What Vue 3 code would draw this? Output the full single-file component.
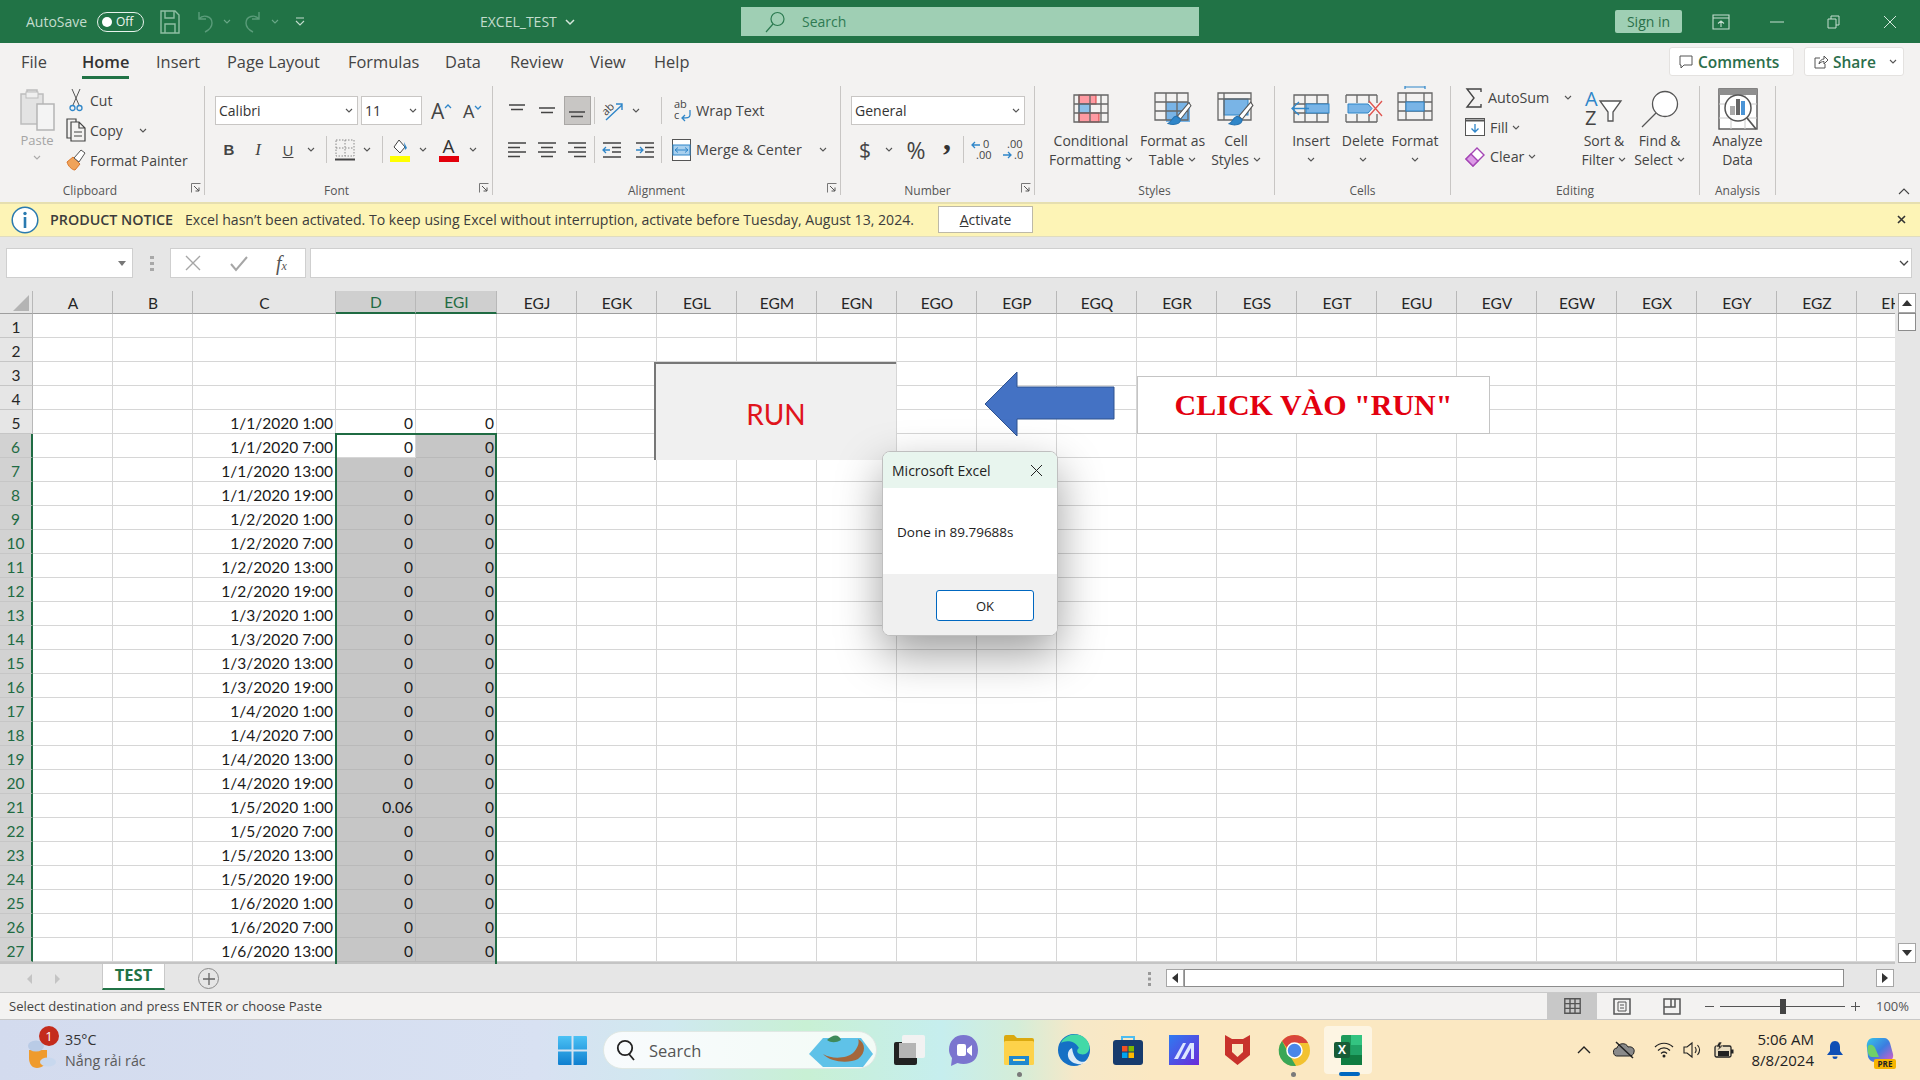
<template>
  <div class="app">
    <svg class="defs" width="0" height="0">
      <symbol id="chev" viewBox="0 0 8 5"><path d="M1 1l3 3 3-3" fill="none" stroke="#555" stroke-width="1.1" /></symbol>
      <symbol id="launch" viewBox="0 0 10 10">
        <path d="M.5 9.5V.5h9" fill="none" stroke="#777" />
        <path d="M3 3l5 5M8 4.500V8H4.500" fill="none" stroke="#555" />
      </symbol>
      <symbol id="brush" viewBox="0 0 24 24">
        <path d="M21 2 10 15l3 3L23 5z" fill="#fff" stroke="#555" />
        <path d="M9 15c-4 0-4 5-8 7 5 2 12 1 12-4z" fill="#2f86c9" stroke="#2572b0" />
      </symbol>
    </svg>

    <header class="titlebar">
      <span class="autosave">AutoSave</span>
      <span class="toggle"><i class="knob"></i>Off</span>
      <svg class="save" width="20" height="24" viewBox="0 0 20 24">
        <path d="M1 1h14l4 4v18H1zM5 1v7h9V1M5 23v-9h10v9" fill="none" stroke="#8fbfa3" stroke-width="1.4" />
      </svg>
      <svg class="undo" width="18" height="24" viewBox="0 0 18 24">
        <path d="M3 2v7h7M3 9c4-5 13-3 13 4 0 4-3 7-7 9" fill="none" stroke="#5a9c7a" stroke-width="1.4" />
      </svg>
      <svg class="small-chev" width="8" height="5" viewBox="0 0 8 5"><path d="M1 1l3 3 3-3" fill="none" stroke="#6aa888" stroke-width="1.1" /></svg>
      <svg class="redo" width="18" height="24" viewBox="0 0 18 24">
        <path d="M15 2v7H8M15 9C11 4 2 6 2 13c0 4 3 7 7 9" fill="none" stroke="#5a9c7a" stroke-width="1.4" />
      </svg>
      <svg class="small-chev" width="8" height="5" viewBox="0 0 8 5"><path d="M1 1l3 3 3-3" fill="none" stroke="#6aa888" stroke-width="1.1" /></svg>
      <svg class="customize" width="10" height="10" viewBox="0 0 10 10">
        <path d="M1 1h8M1 4l4 4 4-4" fill="none" stroke="#c3dccd" stroke-width="1.1" />
      </svg>
      <span class="docname">EXCEL_TEST</span>
      <svg width="10" height="6" viewBox="0 0 10 6"><path d="M1 1l4 4 4-4" fill="none" stroke="#d5e7dc" stroke-width="1.5" /></svg>
      <div class="searchbox">
        <svg width="20" height="22" viewBox="0 0 20 22">
          <circle cx="12.500" cy="8" r="6.500" fill="none" stroke="#2b7a50" stroke-width="1.2" />
          <path d="M8 13 1 21" stroke="#2b7a50" stroke-width="1.2" />
        </svg>
        <span>Search</span>
      </div>
      <span class="signin">Sign in</span>
      <svg class="ribbon-opt" width="18" height="16" viewBox="0 0 18 16">
        <path d="M1 1h16v14H1zM1 4h16M9 13V7M6 9.500 9 7l3 2.500" fill="none" stroke="#c6ded0" stroke-width="1.1" />
      </svg>
      <svg class="win-min" width="14" height="2"><path d="M0 1h14" stroke="#c6ded0" /></svg>
      <svg class="win-max" width="13" height="14" viewBox="0 0 13 14">
        <path d="M1 4h8v9H1zM4 4V1h8v9H9" fill="none" stroke="#c6ded0" />
      </svg>
      <svg class="win-close" width="14" height="14" viewBox="0 0 14 14"><path d="M1 1l12 12M13 1 1 13" stroke="#d5e7dc" /></svg>
    </header>

    <nav class="tabs">
      <span v-for="t in tabs" :key="t.name" class="tab" :class="{ active: t.name === 'Home' }" :style="{ width: t.w + 'px' }">
        <b v-if="t.name === 'Home'">{{ t.name }}</b><template v-else>{{ t.name }}</template>
      </span>
      <div class="tab-actions">
        <span class="action comments">
          <svg width="14" height="14" viewBox="0 0 14 14"><path d="M1 1h12v9H5l-3 3v-3H1z" fill="none" stroke="#555" /></svg>
          Comments
        </span>
        <span class="action share">
          <svg width="14" height="14" viewBox="0 0 14 14"><path d="M6 3H1v10h10V9M5 9c0-3 3-5 5-5V1l4 4-4 4V6.500C8 6.500 6 7.500 5 9z" fill="none" stroke="#555" /></svg>
          Share
          <svg class="share-chev" width="8" height="5"><use href="#chev" /></svg>
        </span>
      </div>
    </nav>

    <section class="ribbon">
      <!-- clipboard -->
      <div class="group g-clip">
        <div class="body clip">
          <div class="paste">
            <svg width="36" height="42" viewBox="0 0 36 42">
              <path d="M2 5h6V1h10v4h6v30H2z" fill="#e3e3e3" stroke="#bdbdbd" stroke-width="1.500" />
              <rect x="7" y="3" width="12" height="6" fill="#efefef" stroke="#bdbdbd" />
              <rect x="18" y="15" width="17" height="26" fill="#f4f4f4" stroke="#b5b5b5" stroke-width="1.500" />
            </svg>
            <span>Paste</span>
            <svg width="8" height="5"><use href="#chev" opacity=".45" /></svg>
          </div>
          <div class="clip-list">
            <div class="clip-row">
              <span class="clip-ico">
                <svg width="14" height="24" viewBox="0 0 14 24">
                  <path d="M3 1l7 16M11 1 4 17" stroke="#555" fill="none" />
                  <circle cx="3.500" cy="20" r="2.500" fill="none" stroke="#2f86c9" stroke-width="1.300" />
                  <circle cx="10.500" cy="20" r="2.500" fill="none" stroke="#2f86c9" stroke-width="1.300" />
                </svg>
              </span>
              <span>Cut</span>
            </div>
            <div class="clip-row">
              <span class="clip-ico">
                <svg width="20" height="24" viewBox="0 0 20 24">
                  <path d="M5 20H1V1h9v3" fill="none" stroke="#444" stroke-width="1.200" />
                  <path d="M5 4h8l6 6v13H5zM13 4v6h6M8 14h8M8 18h8" fill="none" stroke="#444" stroke-width="1.200" />
                </svg>
              </span>
              <span>Copy</span>
              <svg class="copy-chev" width="8" height="5"><use href="#chev" /></svg>
            </div>
            <div class="clip-row">
              <span class="clip-ico">
                <svg width="20" height="22" viewBox="0 0 20 22">
                  <path d="M1 13l6-5 7 7-5 6c-3 0-7-4-8-8z" fill="#f0a35a" stroke="#d9762a" />
                  <path d="M8 9l7-8 4 3-6 9z" fill="#fff" stroke="#555" />
                </svg>
              </span>
              <span>Format Painter</span>
            </div>
          </div>
        </div>
        <div class="label lb-24">Clipboard</div>
        <svg class="launch" width="10" height="10"><use href="#launch" /></svg>
      </div>

      <!-- font -->
      <div class="group g-font">
        <div class="body rows">
          <div class="row">
            <span class="select fontname">Calibri<svg width="8" height="5"><use href="#chev" /></svg></span>
            <span class="select fontsize">11<svg width="8" height="5"><use href="#chev" /></svg></span>
            <span class="grow">A
              <svg width="8" height="5" viewBox="0 0 8 5"><path d="M1 4l3-3 3 3" fill="none" stroke="#2f86c9" stroke-width="1.300" /></svg>
            </span>
            <span class="shrink">A
              <svg width="8" height="5" viewBox="0 0 8 5"><path d="M1 1l3 3 3-3" fill="none" stroke="#2f86c9" stroke-width="1.300" /></svg>
            </span>
          </div>
          <div class="row">
            <span class="slot w28 fmt bold">B</span>
            <span class="slot w30 fmt italic">I</span>
            <span class="slot w30 fmt under">U</span>
            <span class="slot w16"><svg width="8" height="5"><use href="#chev" /></svg></span>
            <i class="vsep sep-a"></i>
            <span class="slot w36">
              <svg width="20" height="22" viewBox="0 0 20 22">
                <path d="M1 1h18v16H1zM10 1v16M1 9h18" fill="none" stroke="#888" stroke-dasharray="1.500 1.500" />
                <path d="M0 20.500h20" stroke="#444" stroke-width="2" />
              </svg>
            </span>
            <span class="slot w8"><svg width="8" height="5"><use href="#chev" /></svg></span>
            <i class="vsep sep-b"></i>
            <span class="slot w34">
              <svg width="20" height="24" viewBox="0 0 20 24">
                <path d="M9 2l6 7-5 6-6-6z" fill="#fff" stroke="#444" />
                <path d="M14 4l3 6-2 2z" fill="#2f86c9" />
                <rect y="18" width="20" height="6" fill="#ffff00" />
              </svg>
            </span>
            <span class="slot w12"><svg width="8" height="5"><use href="#chev" /></svg></span>
            <span class="slot w39 fontcolor">
              <span>A</span><i></i>
            </span>
            <span class="slot w10"><svg width="8" height="5"><use href="#chev" /></svg></span>
          </div>
        </div>
        <div class="label lb-24">Font</div>
        <svg class="launch" width="10" height="10"><use href="#launch" /></svg>
      </div>

      <!-- alignment -->
      <div class="group g-align">
        <div class="body rows">
          <div class="row">
            <span v-for="(a, i) in alignTop" :key="a" class="slot w30" >
              <span class="align-cell" :class="{ picked: i === 2 }">
                <svg width="18" height="14" viewBox="0 0 18 14"><path :d="a" stroke="#444" stroke-width="1.300" /></svg>
              </span>
            </span>
            <i class="vsep sep-c"></i>
            <span class="slot w36">
              <svg width="22" height="22" viewBox="0 0 22 22">
                <text x="0" y="13" transform="rotate(-45 6 10)" class="orient">ab</text>
                <path d="M4 20 20 5M14 4h6v6" fill="none" stroke="#2f86c9" stroke-width="1.400" />
              </svg>
            </span>
            <span class="slot w10"><svg width="8" height="5"><use href="#chev" /></svg></span>
            <i class="vsep sep-d"></i>
            <span class="wrap-btn">
              <svg width="18" height="24" viewBox="0 0 18 24">
                <text x="0" y="9" class="mini">ab</text>
                <text x="0" y="20" class="mini">c</text>
                <path d="M16 11v5c0 3-3 3-8 3M11 16l-3 3 3 3" fill="none" stroke="#2f86c9" stroke-width="1.300" />
              </svg>
              Wrap Text
            </span>
          </div>
          <div class="row">
            <span v-for="a in alignBottom" :key="a" class="slot w30">
              <svg width="18" height="16" viewBox="0 0 18 16"><path :d="a" stroke="#444" stroke-width="1.300" /></svg>
            </span>
            <i class="vsep sep-c"></i>
            <span class="slot w34 indent-first">
              <svg width="20" height="16" viewBox="0 0 20 16">
                <path d="M1 1h18M10 5.500h9M10 10h9M1 15h18" stroke="#444" stroke-width="1.300" />
                <path d="M8 8H1M4 5 1 8l3 3" fill="none" stroke="#2f86c9" stroke-width="1.300" />
              </svg>
            </span>
            <span class="slot w32">
              <svg width="20" height="16" viewBox="0 0 20 16">
                <path d="M1 1h18M10 5.500h9M10 10h9M1 15h18" stroke="#444" stroke-width="1.300" />
                <path d="M1 8h7M5 5l3 3-3 3" fill="none" stroke="#2f86c9" stroke-width="1.300" />
              </svg>
            </span>
            <i class="vsep sep-e"></i>
            <span class="wrap-btn merge">
              <svg width="19" height="22" viewBox="0 0 19 22">
                <rect x=".5" y=".5" width="18" height="21" fill="#fff" stroke="#555" />
                <rect x="1" y="6" width="17" height="10" fill="#a9d0ee" stroke="#2f86c9" />
                <path d="M3 11h13M6 8.500 3 11l3 2.500M13 8.500l3 2.500-3 2.500" fill="none" stroke="#2f86c9" />
              </svg>
              Merge &amp; Center
              <svg class="merge-chev" width="8" height="5"><use href="#chev" /></svg>
            </span>
          </div>
        </div>
        <div class="label lb-20">Alignment</div>
        <svg class="launch" width="10" height="10"><use href="#launch" /></svg>
      </div>

      <!-- number -->
      <div class="group g-number">
        <div class="body rows">
          <div class="row">
            <span class="select numfmt">General<svg width="8" height="5"><use href="#chev" /></svg></span>
          </div>
          <div class="row">
            <span class="slot w28 dollar">$</span>
            <span class="slot w20"><svg width="8" height="5"><use href="#chev" /></svg></span>
            <span class="slot w34 percent">%</span>
            <span class="slot w28 comma">,</span>
            <i class="vsep sep-f"></i>
            <span class="slot w34 dec">
              <svg width="20" height="22" viewBox="0 0 20 22">
                <path d="M9 6H1M4 3 1 6l3 3" fill="none" stroke="#2f86c9" stroke-width="1.300" />
                <text x="12" y="9" class="mini">0</text><text x="5" y="20" class="mini">.00</text>
              </svg>
            </span>
            <span class="slot w28 dec">
              <svg width="20" height="22" viewBox="0 0 20 22">
                <text x="5" y="9" class="mini">.00</text><text x="12" y="20" class="mini">.0</text>
                <path d="M1 16h8M6 13l3 3-3 3" fill="none" stroke="#2f86c9" stroke-width="1.300" />
              </svg>
            </span>
          </div>
        </div>
        <div class="label lb-20">Number</div>
        <svg class="launch" width="10" height="10"><use href="#launch" /></svg>
      </div>

      <!-- styles -->
      <div class="group g-styles">
        <div class="body bigs">
          <div class="big w92">
            <div class="big-ico">
              <svg width="36" height="29" viewBox="0 0 36 29">
                <rect x="6" y="1" width="17" height="9" fill="#ff9aa2" stroke="#d63b3b" />
                <rect x="6" y="10" width="11" height="9" fill="#8dbfe8" stroke="#2f86c9" />
                <rect x="6" y="19" width="20" height="9" fill="#ff9aa2" stroke="#d63b3b" />
                <path d="M1 1h34v27H1zM1 10h34M1 19h34M6 1v27M17 1v27M28 1v27" fill="none" stroke="#666" stroke-width="1.300" />
              </svg>
            </div>
            <span>Conditional</span>
            <span>Formatting<svg class="inl" width="8" height="5"><use href="#chev" /></svg></span>
          </div>
          <div class="big w71">
            <div class="big-ico">
              <svg width="38" height="34" viewBox="0 0 38 34">
                <rect x="12" y="10" width="24" height="20" fill="#79b4e6" />
                <path d="M1 1h33v27H1zM1 10h33M1 19h33M12 1v27M23 1v27" fill="none" stroke="#666" stroke-width="1.300" />
                <use href="#brush" x="13" y="8" width="25" height="26" />
              </svg>
            </div>
            <span>Format as</span>
            <span>Table<svg class="inl" width="8" height="5"><use href="#chev" /></svg></span>
          </div>
          <div class="big w56">
            <div class="big-ico">
              <svg width="38" height="34" viewBox="0 0 38 34">
                <rect x="7" y="7" width="24" height="16" fill="#79b4e6" stroke="#2f86c9" />
                <path d="M1 1h33v27H1zM1 7h33M7 1v27" fill="none" stroke="#666" stroke-width="1.300" />
                <use href="#brush" x="11" y="8" width="26" height="26" />
              </svg>
            </div>
            <span>Cell</span>
            <span>Styles<svg class="inl" width="8" height="5"><use href="#chev" /></svg></span>
          </div>
        </div>
        <div class="label">Styles</div>
      </div>

      <!-- cells -->
      <div class="group g-cells">
        <div class="body bigs">
          <div class="big w52">
            <div class="big-ico">
              <svg width="40" height="30" viewBox="0 0 40 30">
                <path d="M3 1h34v27H3zM3 10h34M3 19h34M14 1v27M26 1v27" fill="none" stroke="#666" stroke-width="1.300" />
                <rect x="15" y="10" width="23" height="9" fill="#79b4e6" stroke="#2f86c9" />
                <path d="M18 14.500H2M8 8l-7 6.500L8 21" fill="none" stroke="#2f86c9" stroke-width="1.300" />
              </svg>
            </div>
            <span>Insert</span>
            <span><svg width="8" height="5"><use href="#chev" /></svg></span>
          </div>
          <div class="big w52">
            <div class="big-ico">
              <svg width="40" height="30" viewBox="0 0 40 30">
                <path d="M3 1h31M3 28h31M3 1v8M3 20v8M14 1v8M14 20v8M26 1v8M26 20v8M34 1v8M34 20v8" fill="none" stroke="#666" stroke-width="1.300" />
                <path d="M5 10h20l4 4.500-4 4.500H5z" fill="#79b4e6" stroke="#2f86c9" />
                <path d="M26 7l13 15M39 7 26 22" stroke="#e0544f" stroke-width="1.300" />
              </svg>
            </div>
            <span>Delete</span>
            <span><svg width="8" height="5"><use href="#chev" /></svg></span>
          </div>
          <div class="big w52">
            <div class="big-ico format-ico">
              <svg width="36" height="36" viewBox="0 0 36 36">
                <path d="M8 1h20M8 0v3M28 0v3" stroke="#2f86c9" stroke-width="1.200" />
                <path d="M1 7h34v27H1zM1 16h34M1 25h34M9 7v27M27 7v27" fill="none" stroke="#666" stroke-width="1.300" />
                <rect x="9" y="16" width="18" height="9" fill="#79b4e6" stroke="#2f86c9" />
              </svg>
            </div>
            <span>Format</span>
            <span><svg width="8" height="5"><use href="#chev" /></svg></span>
          </div>
        </div>
        <div class="label">Cells</div>
      </div>

      <!-- editing -->
      <div class="group g-edit">
        <div class="body bigs">
          <div class="edit-list">
            <div class="edit-row">
              <svg width="18" height="20" viewBox="0 0 18 20"><path d="M16 4V1H2l7 9-7 9h14v-3" fill="none" stroke="#444" stroke-width="1.400" /></svg>
              <span>AutoSum</span>
              <svg class="auto-chev" width="8" height="5"><use href="#chev" /></svg>
            </div>
            <div class="edit-row">
              <svg width="20" height="18" viewBox="0 0 20 18">
                <rect x=".5" y=".5" width="19" height="17" fill="#fff" stroke="#555" />
                <path d="M1 2.500h18" stroke="#555" stroke-width="2" />
                <path d="M10 6v8M6.500 10.500 10 14l3.500-3.500" fill="none" stroke="#2f86c9" stroke-width="1.300" />
              </svg>
              <span>Fill</span>
              <svg class="inl" width="8" height="5"><use href="#chev" /></svg>
            </div>
            <div class="edit-row">
              <svg width="20" height="20" viewBox="0 0 20 20">
                <path d="M1 12 12 1l7 7-11 11z" fill="#fff" stroke="#a445b5" stroke-width="1.400" />
                <path d="M1 12l5-5 7 7-5 5z" fill="#dc9be6" stroke="#a445b5" stroke-width="1.400" />
              </svg>
              <span>Clear</span>
              <svg class="inl" width="8" height="5"><use href="#chev" /></svg>
            </div>
          </div>
          <div class="big w58">
            <div class="big-ico">
              <svg width="38" height="36" viewBox="0 0 38 36">
                <text x="0" y="15" class="az blue">A</text>
                <text x="0" y="34" class="az">Z</text>
                <path d="M15 10h21l-8 11v9h-5v-9z" fill="#fff" stroke="#555" stroke-width="1.300" />
              </svg>
            </div>
            <span>Sort &amp;</span>
            <span>Filter<svg class="inl" width="8" height="5"><use href="#chev" /></svg></span>
          </div>
          <div class="big w53">
            <div class="big-ico">
              <svg width="38" height="38" viewBox="0 0 38 38">
                <circle cx="24" cy="14" r="12.500" fill="#fff" stroke="#555" stroke-width="1.300" />
                <path d="M15 23 1 37" stroke="#555" stroke-width="1.300" />
              </svg>
            </div>
            <span>Find &amp;</span>
            <span>Select<svg class="inl" width="8" height="5"><use href="#chev" /></svg></span>
          </div>
        </div>
        <div class="label">Editing</div>
      </div>

      <!-- analysis -->
      <div class="group g-analysis">
        <div class="body bigs">
          <div class="big w75">
            <div class="big-ico">
              <svg width="40" height="42" viewBox="0 0 40 42">
                <rect x="1" y="1" width="38" height="40" fill="#fff" stroke="#555" stroke-width="1.400" />
                <path d="M1 1h38v6H1z" fill="#8f8f8f" />
                <path d="M1 16h38M1 30h38M13 7v34M27 7v34" stroke="#ccc" />
                <circle cx="20" cy="20" r="13" fill="#fff" stroke="#555" stroke-width="1.500" />
                <rect x="12" y="18" width="5" height="9" fill="#aaa" />
                <rect x="18" y="11" width="4" height="16" fill="#666" />
                <rect x="23" y="13" width="4" height="14" fill="#4a94d6" />
                <path d="M29 30l9 11" stroke="#555" stroke-width="1.800" />
              </svg>
            </div>
            <span>Analyze</span>
            <span>Data</span>
          </div>
        </div>
        <div class="label">Analysis</div>
      </div>

      <svg class="collapse" width="12" height="7" viewBox="0 0 12 7"><path d="M1 6l5-5 5 5" fill="none" stroke="#444" stroke-width="1.100" /></svg>
    </section>

    <section class="notice">
      <svg width="28" height="28" viewBox="0 0 28 28">
        <circle cx="14" cy="14" r="12.800" fill="#fff" stroke="#2a7ab0" stroke-width="1.500" />
        <circle cx="14" cy="7.500" r="1.700" fill="#2a7ab0" />
        <rect x="12.700" y="11" width="2.600" height="11" fill="#2a7ab0" />
      </svg>
      <strong>PRODUCT NOTICE</strong>
      <span class="msg">Excel hasn’t been activated. To keep using Excel without interruption, activate before Tuesday, August 13, 2024.</span>
      <button class="activate"><u>A</u>ctivate</button>
      <svg class="notice-x" width="9" height="9" viewBox="0 0 9 9"><path d="M1 1l7 7M8 1 1 8" stroke="#333" stroke-width="1.600" /></svg>
    </section>

    <section class="formulabar">
      <div class="namebox"><i class="tri"></i></div>
      <svg class="grip" width="4" height="16" viewBox="0 0 4 16"><path d="M0 1h4v3H0zM0 7h4v3H0zM0 13h4v3H0z" fill="#a8a8a8" /></svg>
      <div class="fx">
        <svg width="16" height="16" viewBox="0 0 16 16"><path d="M1 1l14 14M15 1 1 15" stroke="#a6a6a6" stroke-width="1.400" /></svg>
        <svg width="18" height="15" viewBox="0 0 18 15"><path d="M1 8l5 6L17 1" fill="none" stroke="#a6a6a6" stroke-width="2" /></svg>
        <span class="fx-label">f<small>x</small></span>
      </div>
      <div class="formula-input">
        <svg width="10" height="6" viewBox="0 0 10 6"><path d="M1 1l4 4 4-4" fill="none" stroke="#444" stroke-width="1.300" /></svg>
      </div>
    </section>

    <section class="sheet-wrap">
      <div class="sheet">
        <div class="grid">
          <div class="corner"><i></i></div>
          <div v-for="c in columns" :key="c" class="colhead" :class="{ sel: c === 'D' || c === 'EGI' }">{{ c }}</div>
          <template v-for="r in rows" :key="r.n">
            <div class="rowhead" :class="{ sel: r.n >= 6 }">{{ r.n }}</div>
            <div
              v-for="(c, i) in columns"
              :key="c"
              class="cell"
              :class="{ shade: isShaded(r.n, c) }"
            >{{ r.vals[i] }}</div>
          </template>
        </div>
        <div class="selection"></div>

        <div class="run-btn">RUN</div>
        <svg class="arrow" width="131" height="66" viewBox="0 0 131 66">
          <path d="M130 16v32H33v17L1 33 33 1v15z" fill="#4472c4" stroke="#2f528f" />
        </svg>
        <div class="hint">CLICK VÀO "RUN"</div>

        <div class="dialog">
          <div class="dlg-head">
            <span>Microsoft Excel</span>
            <svg width="13" height="13" viewBox="0 0 13 13"><path d="M1 1l11 11M12 1 1 12" stroke="#222" /></svg>
          </div>
          <div class="dlg-body">Done in 89.79688s</div>
          <div class="dlg-foot"><button>OK</button></div>
        </div>
      </div>
      <div class="vscroll">
        <span class="sb-btn"><i class="tri-up"></i></span>
        <span class="vthumb"></span>
        <span class="sb-space"></span>
        <span class="sb-btn"><i class="tri-down"></i></span>
      </div>
    </section>

    <section class="tabbar">
      <i class="nav-l"></i>
      <i class="nav-r"></i>
      <span class="sheet-tab">TEST</span>
      <span class="add-sheet">
        <svg width="12" height="12" viewBox="0 0 12 12"><path d="M6 0v12M0 6h12" stroke="#666" stroke-width="1.300" /></svg>
      </span>
      <svg class="tab-grip" width="3" height="14" viewBox="0 0 3 14"><path d="M0 0h3v3H0zM0 5.500h3v3H0zM0 11h3v3H0z" fill="#999" /></svg>
      <div class="hscroll">
        <span class="sb-btn"><i class="tri-left"></i></span>
        <span class="hthumb"></span>
        <span class="sb-btn"><i class="tri-right"></i></span>
      </div>
    </section>

    <footer class="statusbar">
      <span class="status-text">Select destination and press ENTER or choose Paste</span>
      <div class="view-btns">
        <span class="view picked">
          <svg width="17" height="16" viewBox="0 0 17 16"><path d="M.8.800h15.400v14.400H.8zM.8 5.600h15.400M.8 10.400h15.400M6 .8v14.400M11 .8v14.400" fill="none" stroke="#555" stroke-width="1.400" /></svg>
        </span>
        <span class="view">
          <svg width="18" height="17" viewBox="0 0 18 17"><path d="M1 1h16v15H1z" fill="none" stroke="#555" stroke-width="1.500" /><path d="M5 4h8v9H5zM7 7h4M7 10h4" fill="none" stroke="#555" /></svg>
        </span>
        <span class="view">
          <svg width="18" height="17" viewBox="0 0 18 17"><path d="M1 1h16v15H1zM8 1v8H1M8 9h4V1" fill="none" stroke="#555" stroke-width="1.500" /></svg>
        </span>
      </div>
      <svg class="zoom-minus" width="9" height="1"><path d="M0 .5h9" stroke="#555" /></svg>
      <div class="zoom-track"><i></i></div>
      <svg class="zoom-plus" width="9" height="9" viewBox="0 0 9 9"><path d="M0 4.500h9M4.500 0v9" stroke="#555" /></svg>
      <span class="zoom-val">100%</span>
    </footer>

    <footer class="taskbar">
      <div class="weather">
        <div class="weather-ico">
          <svg width="34" height="34" viewBox="0 0 32 34">
            <path d="M3 14h18v8c0 6-5 10-10 10-5 0-8-4-8-10z" fill="#ef9b2d" />
            <ellipse cx="10" cy="10" rx="8" ry="5.500" fill="#b9cbe6" />
            <ellipse cx="22" cy="26" rx="8" ry="4.500" fill="#c8d8ee" />
          </svg>
          <span class="badge">1</span>
        </div>
        <div class="weather-text">
          <span>35°C</span>
          <span class="dim">Nắng rải rác</span>
        </div>
      </div>

      <svg class="winlogo" width="29" height="29" viewBox="0 0 29 29">
        <defs><linearGradient id="wl" x1="0" y1="0" x2="0" y2="1"><stop offset="0" stop-color="#4cc2f5" /><stop offset="1" stop-color="#0f7fcf" /></linearGradient></defs>
        <path d="M1 0h12.500v13.500H0V1a1 1 0 0 1 1-1zM15.500 0H28a1 1 0 0 1 1 1v12.500H15.500zM0 15.500h13.500V29H1a1 1 0 0 1-1-1zM15.500 15.500H29V28a1 1 0 0 1-1 1H15.500z" fill="url(#wl)" />
      </svg>

      <div class="tb-search">
        <svg width="20" height="22" viewBox="0 0 20 22">
          <circle cx="9" cy="9" r="7.200" fill="none" stroke="#222" stroke-width="1.800" />
          <path d="M13 15l5 6" stroke="#222" stroke-width="1.800" />
        </svg>
        <span>Search</span>
        <svg class="boat" width="64" height="36" viewBox="0 0 64 36">
          <path d="M14 6h38l12 16-10 13H14L0 22z" fill="#5fc2e8" />
          <path d="M18 8c6-6 12-6 14 0-5 3-10 3-14 0z" fill="#3f8a5a" />
          <path d="M14 22c10 6 24 4 30-1 4-4 7-10 5-14 8 4 8 14 0 20-10 5-28 3-35-5z" fill="#a4673b" />
        </svg>
      </div>

      <!-- task view -->
      <svg class="tb-ico taskview" width="31" height="30" viewBox="0 0 31 30">
        <rect x="0" y="7" width="23" height="23" rx="2" fill="#222" />
        <rect x="8" y="0" width="23" height="23" rx="2" fill="#f2f2f2" />
        <rect x="5" y="8" width="17" height="15" fill="#b5b5b5" />
      </svg>
      <!-- meet -->
      <svg class="tb-ico meet" width="29" height="31" viewBox="0 0 29 31">
        <path d="M14.500 0C23 0 29 6 29 15s-6 14-14.500 14c-2 0-4-.4-6-1L2 31l1-8C1 20 0 18 0 15 0 6 6 0 14.500 0z" fill="#7b75cf" />
        <rect x="8" y="9" width="9" height="12" rx="2" fill="#fff" />
        <path d="M18 14l5-4v11l-5-4z" fill="#fff" />
      </svg>
      <!-- folder -->
      <svg class="tb-ico folder" width="30" height="30" viewBox="0 0 30 30">
        <path d="M0 2a2 2 0 0 1 2-2h8l3 3h15a2 2 0 0 1 2 2v4H0z" fill="#dba90f" />
        <rect x="0" y="6" width="30" height="24" rx="1.500" fill="#fdd24a" />
        <rect x="5" y="21" width="20" height="9" fill="#1e88cf" />
        <rect x="9" y="24" width="12" height="2" fill="#ffe88a" />
      </svg>
      <!-- edge -->
      <svg class="tb-ico edge" width="32" height="32" viewBox="0 0 32 32">
        <circle cx="16" cy="16" r="16" fill="#1570c5" />
        <path d="M3 9C8-2 26-3 31 10c2 7-3 12-9 10-4-1-3-5-1-6C17 6 7 6 3 9z" fill="#43d9a7" />
        <path d="M14 14c-5 2-6 10 0 14 5 3 11 3 15-1-5 2-13 1-15-13z" fill="#fff" opacity=".85" />
      </svg>
      <!-- store -->
      <svg class="tb-ico store" width="30" height="30" viewBox="0 0 30 30">
        <path d="M9 6V2h12v4" fill="none" stroke="#4dbcf0" stroke-width="2" />
        <rect y="5" width="30" height="25" rx="3" fill="#173b6d" />
        <rect x="9" y="11" width="5.500" height="5.500" fill="#f25022" />
        <rect x="15.500" y="11" width="5.500" height="5.500" fill="#7fba00" />
        <rect x="9" y="17.500" width="5.500" height="5.500" fill="#00a4ef" />
        <rect x="15.500" y="17.500" width="5.500" height="5.500" fill="#ffb900" />
      </svg>
      <!-- pen app -->
      <svg class="tb-ico pen" width="30" height="30" viewBox="0 0 30 30">
        <defs><linearGradient id="pn" x1="0" y1="0" x2="1" y2="1"><stop offset="0" stop-color="#2f7bf0" /><stop offset="1" stop-color="#6a2bd9" /></linearGradient></defs>
        <rect width="30" height="30" fill="url(#pn)" />
        <path d="M5 24 14 8h3L9 24zM12 24l9-16h4v16h-3V13l-6 11z" fill="#dce6ff" />
      </svg>
      <!-- mcafee -->
      <svg class="tb-ico mcafee" width="25" height="30" viewBox="0 0 25 30">
        <path d="M0 0l7 4h11l7-4v20l-12.500 10L0 20z" fill="#c8322c" />
        <path d="M7 9h11v8l-5.500 5L7 17z" fill="#fbe8c2" />
      </svg>
      <!-- chrome -->
      <svg class="tb-ico chrome" width="31" height="31" viewBox="0 0 31 31">
        <circle cx="15.500" cy="15.500" r="15.500" fill="#f2c230" />
        <path d="M15.500 0A15.500 15.500 0 0 1 29 8H15.500a8 8 0 0 0-7.500 5L3 6A15.500 15.500 0 0 1 15.500 0z" fill="#d9453a" />
        <path d="M3 6l7.500 14L17 31A15.500 15.500 0 0 1 3 6z" fill="#3aa757" />
        <circle cx="15.500" cy="15.500" r="7.500" fill="#4a87e8" stroke="#fff" stroke-width="1.500" />
      </svg>
      <!-- excel -->
      <div class="tb-excel">
        <svg width="28" height="30" viewBox="0 0 28 30">
          <rect x="7" y="0" width="21" height="30" rx="2" fill="#1e9a5a" />
          <rect x="17" y="0" width="11" height="10" fill="#33c481" />
          <rect x="17" y="10" width="11" height="10" fill="#21a366" />
          <rect x="7" y="20" width="21" height="10" fill="#107c41" />
          <rect x="0" y="7" width="16" height="16" rx="2" fill="#185c37" />
          <text x="4" y="19" class="x-mark">X</text>
        </svg>
      </div>

      <div class="tray">
        <svg width="14" height="8" viewBox="0 0 14 8"><path d="M1 7l6-6 6 6" fill="none" stroke="#222" stroke-width="1.400" /></svg>
        <svg class="tray-cloud" width="22" height="18" viewBox="0 0 22 18">
          <path d="M5 15a4 4 0 0 1-1-8c1-5 9-6 11-1 4-1 7 2 6 5 0 3-3 4-5 4z" fill="#8a8a8a" stroke="#222" />
          <path d="M3 1l17 16" stroke="#222" stroke-width="1.500" />
        </svg>
        <svg class="tray-wifi" width="20" height="16" viewBox="0 0 20 16">
          <path d="M1 5c5-5 13-5 18 0M4 8.500c3.500-3.500 8.500-3.500 12 0M7 11.500c2-2 4-2 6 0" fill="none" stroke="#222" stroke-width="1.200" />
          <circle cx="10" cy="14" r="1.500" fill="#222" />
        </svg>
        <svg class="tray-vol" width="19" height="16" viewBox="0 0 19 16">
          <path d="M1 5h3l5-4v14l-5-4H1zM12 5c1.500 2 1.500 4 0 6M14.500 3c2.500 3 2.500 7 0 10" fill="none" stroke="#222" stroke-width="1.100" />
        </svg>
        <svg class="tray-bat" width="20" height="16" viewBox="0 0 20 16">
          <rect x="1" y="4" width="16" height="11" rx="1.500" fill="#e8dcc0" stroke="#222" stroke-width="1.300" />
          <rect x="4" y="9" width="11" height="5" fill="#222" />
          <rect x="17" y="7.500" width="2.500" height="4" fill="#222" />
          <path d="M5 0 2 5h3l-2 4 6-5H6l2-4z" fill="#222" stroke="#fbe8c2" stroke-width=".6" />
        </svg>
        <div class="clock"><span>5:06 AM</span><span>8/8/2024</span></div>
        <svg class="tray-bell" width="16" height="19" viewBox="0 0 16 19">
          <path d="M8 0c3.500 0 5 3 5 6v4l3 4H0l3-4V6c0-3 1.500-6 5-6z" fill="#0f4fb5" />
          <path d="M5.500 15.500h5a2.500 2.500 0 0 1-5 0z" fill="#0f4fb5" />
        </svg>
        <div class="copilot">
          <svg width="28" height="28" viewBox="0 0 28 28">
            <defs><linearGradient id="cp" x1="0" y1="0" x2="1" y2="1"><stop offset="0" stop-color="#36c4e8" /><stop offset=".5" stop-color="#3b7de0" /><stop offset="1" stop-color="#e05ac8" /></linearGradient></defs>
            <path d="M7 2h11c3 0 5 2 6 5l3 11c1 4-2 8-6 8H9c-3 0-6-2-7-5L1 12C0 6 3 2 7 2z" fill="url(#cp)" />
            <path d="M2 10c2-2 6-2 8 4l3 7H6c-4 0-5-7-4-11z" fill="#6fd06a" />
          </svg>
          <span class="pre">PRE</span>
        </div>
      </div>
      <i class="run-dot dot-a"></i>
      <i class="run-dot dot-b"></i>
      <i class="run-bar"></i>
    </footer>
  </div>
</template>

<script setup>
const tabs = [
  { name: 'File', w: 61 },
  { name: 'Home', w: 74 },
  { name: 'Insert', w: 71 },
  { name: 'Page Layout', w: 121 },
  { name: 'Formulas', w: 97 },
  { name: 'Data', w: 65 },
  { name: 'Review', w: 80 },
  { name: 'View', w: 64 },
  { name: 'Help', w: 60 }
]

const alignTop = [
  'M1 1h16M3 5.500h12',
  'M1 4h16M3 8.500h12',
  'M1 8h16M3 12.500h12'
]
const alignBottom = [
  'M0 1h18M0 5.500h12M0 10h18M0 14.500h12',
  'M0 1h18M3 5.500h12M0 10h18M3 14.500h12',
  'M0 1h18M6 5.500h12M0 10h18M6 14.500h12'
]

const columns = ['A', 'B', 'C', 'D', 'EGI', 'EGJ', 'EGK', 'EGL', 'EGM', 'EGN', 'EGO', 'EGP', 'EGQ', 'EGR', 'EGS', 'EGT', 'EGU', 'EGV', 'EGW', 'EGX', 'EGY', 'EGZ', 'EHA']

const hours = ['1:00', '7:00', '13:00', '19:00']

// rows 5..27 hold a date and two readings, one every six hours
const rows = Array.from({ length: 27 }, (_, i) => {
  const n = i + 1
  const vals = columns.map(() => '')
  if (n >= 5) {
    const k = n - 5
    vals[2] = `1/${Math.floor(k / 4) + 1}/2020 ${hours[k % 4]}`
    vals[3] = n === 21 ? '0.06' : '0'
    vals[4] = '0'
  }
  return { n, vals }
})

const isShaded = (n, c) => {
  if (n < 6 || (c !== 'D' && c !== 'EGI')) return false
  return !(n === 6 && c === 'D')
}
</script>

<style>
html, body { margin: 0; padding: 0; overflow: hidden; }
</style>

<style scoped>
.app {
  width: 1920px;
  height: 1080px;
  display: flex;
  flex-direction: column;
  font-family: "Open Sans", "Noto Sans", sans-serif;
  font-size: 14px;
  color: #444;
  overflow: hidden;
  background: #f3f2f1;
}
.defs { position: absolute; }
svg { display: block; flex: none; overflow: visible; }

/* title bar */
.titlebar {
  height: 43px;
  flex: none;
  background: #217346;
  display: flex;
  align-items: center;
  color: #c3dccd;
  padding-left: 26px;
}
.autosave { width: 71px; font-size: 14px; }
.toggle {
  width: 47px;
  height: 20px;
  box-sizing: border-box;
  border: 1.500px solid #e8f2ec;
  border-radius: 10px;
  display: flex;
  align-items: center;
  padding-left: 4px;
  gap: 4px;
  font-size: 12px;
  color: #eef5f1;
}
.knob { width: 10px; height: 10px; border-radius: 50%; background: #fff; }
.save { margin-left: 16px; }
.undo { margin-left: 16px; }
.small-chev { margin-left: 9px; }
.redo { margin-left: 13px; }
.customize { margin-left: 16px; }
.docname { margin-left: 175px; width: 85px; font-size: 14px; }
.searchbox {
  margin-left: 166px;
  width: 458px;
  height: 29px;
  background: #9fcfb4;
  display: flex;
  align-items: center;
  box-sizing: border-box;
  padding-left: 24px;
  gap: 17px;
  color: #2e7a52;
  font-size: 14px;
}
.signin {
  margin-left: 416px;
  width: 67px;
  height: 23px;
  line-height: 23px;
  text-align: center;
  background: #9fcfb4;
  color: #2a6f4a;
  border-radius: 2px;
}
.ribbon-opt { margin-left: 30px; }
.win-min { margin-left: 40px; }
.win-max { margin-left: 43px; }
.win-close { margin-left: 43px; }

/* tabs */
.tabs {
  height: 39px;
  flex: none;
  box-sizing: border-box;
  display: flex;
  align-items: center;
  padding: 0 0 2px 21px;
  font-size: 16.400px;
  color: #444;
}
.tab { flex: none; position: relative; }
.tab b { font-weight: 600; color: #333; }
.tab.active::after {
  content: "";
  position: absolute;
  left: 0;
  bottom: -6px;
  width: 47px;
  height: 3px;
  background: #217346;
}
.tab-actions { margin-left: auto; display: flex; gap: 10px; padding-right: 16px; }
.action {
  height: 29px;
  background: #fff;
  border: 1px solid #e4e2e0;
  border-radius: 3px;
  box-sizing: border-box;
  display: flex;
  align-items: center;
  gap: 5px;
  font-weight: 600;
  color: #2b6e4b;
  font-size: 15.500px;
}
.comments { width: 125px; padding-left: 9px; }
.share { width: 100px; padding-left: 9px; }
.share-chev { margin-left: 8px; }

/* ribbon */
.ribbon {
  height: 120px;
  flex: none;
  display: flex;
  box-sizing: border-box;
  padding: 4px 0 7px;
}
.group {
  position: relative;
  flex: none;
  box-sizing: border-box;
  border-right: 1px solid #c8c6c4;
  display: flex;
  flex-direction: column;
}
.g-clip { width: 205px; }
.g-font { width: 288px; }
.g-align { width: 348px; }
.g-number { width: 194px; }
.g-styles { width: 240px; }
.g-cells { width: 176px; }
.g-edit { width: 249px; }
.g-analysis { width: 76px; }
.body { flex: 1; min-height: 0; }
.label {
  height: 18px;
  margin-bottom: -5px;
  line-height: 18px;
  text-align: center;
  font-size: 12px;
  color: #555;
}
.lb-24 { padding-right: 24px; }
.lb-20 { padding-right: 20px; }
.launch { position: absolute; right: 3px; bottom: 2px; }
.collapse { margin: auto 10px 0 auto; }

.clip { display: flex; padding-left: 19px; }
.paste {
  width: 36px;
  padding-top: 3px;
  display: flex;
  flex-direction: column;
  align-items: center;
  color: #a5a5a5;
  font-size: 13px;
}
.paste svg:last-child { margin-top: 6px; }
.clip-list { margin: -1px 0 0 11px; display: flex; flex-direction: column; }
.clip-row {
  height: 30px;
  display: flex;
  align-items: center;
  gap: 4px;
  white-space: nowrap;
}
.clip-ico { width: 20px; display: flex; justify-content: center; flex: none; }
.copy-chev { margin-left: 12px; }

.rows { display: flex; flex-direction: column; gap: 10px; padding-top: 10px; }
.row { display: flex; align-items: center; height: 29px; }
.g-font .rows { padding-left: 10px; }
.g-align .rows { padding-left: 9px; }
.g-number .rows { padding-left: 10px; }
.select {
  box-sizing: border-box;
  height: 29px;
  background: #fff;
  border: 1px solid #c8c6c4;
  display: flex;
  align-items: center;
  justify-content: space-between;
  padding: 0 4px 0 3px;
  color: #333;
  font-size: 14px;
}
.fontname { width: 143px; }
.fontsize { width: 61px; margin-left: 3px; }
.numfmt { width: 174px; }
.grow, .shrink { font-size: 21px; color: #444; display: flex; align-items: flex-start; }
.grow { margin-left: 9px; width: 32px; }
.shrink { font-size: 18px; width: 28px; }
.grow svg { margin: 7px 0 0 0; }
.shrink svg { margin: 6px 0 0 0; }
.slot { display: flex; align-items: center; justify-content: center; flex: none; height: 29px; }
.w8 { width: 8px; }
.w10 { width: 10px; }
.w12 { width: 12px; }
.w16 { width: 16px; }
.w20 { width: 20px; }
.w28 { width: 28px; }
.w30 { width: 30px; }
.w32 { width: 32px; }
.w34 { width: 34px; }
.w36 { width: 36px; }
.w39 { width: 39px; }
.fmt { font-size: 15px; color: #444; }
.bold { font-weight: 700; font-family: "Liberation Sans", sans-serif; }
.italic { font-style: italic; font-family: "Liberation Serif", serif; font-size: 17px; }
.under { text-decoration: underline; }
.vsep { width: 1px; height: 27px; background: #c8c6c4; flex: none; }
.sep-a { margin-left: 7px; }
.sep-b { margin-left: 11px; }
.sep-c { margin-left: 2px; }
.sep-d { margin-left: 20px; }
.sep-e { margin-left: 0; }
.sep-f { margin-left: 2px; }
.fontcolor { flex-direction: column; color: #333; font-size: 19px; line-height: 19px; }
.fontcolor i { width: 20px; height: 6px; background: #e3000b; display: block; }
.align-cell { width: 27px; height: 29px; display: flex; align-items: center; justify-content: center; }
.align-cell.picked { background: #c8c6c4; box-shadow: inset 0 0 0 1px #a9a7a5; }
.orient { font-size: 11px; fill: #444; }
.mini { font-size: 11px; fill: #444; font-family: "Open Sans", sans-serif; }
.wrap-btn { margin-left: 12px; display: flex; align-items: center; gap: 4px; white-space: nowrap; font-size: 14.400px; }
.merge { margin-left: 10px; gap: 5px; }
.merge-chev { margin-left: 12px; }
.dollar { font-size: 21px; color: #444; }
.percent { font-size: 23px; color: #444; }
.comma {
  font-size: 32px;
  font-weight: 700;
  line-height: 8px;
  color: #333;
  font-family: "Liberation Serif", serif;
  align-items: flex-start;
}

.bigs { display: flex; padding-left: 10px; }
.big { display: flex; flex-direction: column; align-items: center; flex: none; line-height: 19px; white-space: nowrap; }
.big span { height: 19px; display: flex; align-items: center; }
.big-ico { height: 45px; display: flex; align-items: center; justify-content: center; }
.format-ico { align-items: flex-start; padding-top: 0; }
.inl { margin-left: 4px; }
.w92 { width: 92px; }
.w71 { width: 71px; }
.w56 { width: 56px; }
.w52 { width: 52px; }
.w58 { width: 58px; }
.w53 { width: 53px; }
.w75 { width: 75px; }
.g-analysis .bigs { padding-left: 0; }
.g-edit .bigs { padding-left: 14px; }
.edit-list { width: 110px; display: flex; flex-direction: column; margin-top: -3px; font-size: 14.300px; }
.edit-row { height: 29.500px; display: flex; align-items: center; gap: 5px; }
.edit-row .inl { margin-left: -1px; }
.auto-chev { margin-left: 10px; }
.az { font-size: 20px; fill: #444; font-family: "Open Sans", sans-serif; }
.az.blue { fill: #2f86c9; }

/* notice */
.notice {
  height: 35px;
  flex: none;
  box-sizing: border-box;
  background: #fdf4b6;
  border-top: 2px solid #e6dfb0;
  border-bottom: 1px solid #e0dcc0;
  display: flex;
  align-items: center;
  padding: 0 0 1px 11px;
  color: #3c3c3c;
}
.notice strong { margin-left: 11px; width: 135px; font-weight: 600; font-size: 14.300px; white-space: nowrap; }
.msg { width: 753px; white-space: nowrap; font-size: 14.120px; }
.activate {
  width: 95px;
  height: 27px;
  background: #fff;
  border: 1px solid #bdb9a8;
  font: inherit;
  color: #333;
  padding: 0;
}
.notice-x { margin-left: auto; margin-right: 14px; }

/* formula bar */
.formulabar {
  height: 54px;
  flex: none;
  background: #e6e6e6;
  display: flex;
  align-items: flex-start;
  padding-top: 11px;
  box-sizing: border-box;
}
.namebox, .fx, .formula-input {
  height: 30px;
  background: #fff;
  border: 1px solid #cfcfcf;
  box-sizing: border-box;
}
.namebox { margin-left: 6px; width: 127px; display: flex; align-items: center; justify-content: flex-end; padding-right: 6px; }
.tri { width: 0; height: 0; border: 4px solid transparent; border-top: 5px solid #777; border-bottom: 0; }
.grip { margin: 7px 0 0 17px; }
.fx {
  margin-left: 16px;
  width: 136px;
  display: flex;
  align-items: center;
  padding-left: 14px;
  gap: 29px;
}
.fx-label { font-family: "Liberation Serif", serif; font-style: italic; font-size: 20px; color: #555; margin-left: -1px; }
.fx-label small { font-size: 12px; }
.formula-input {
  margin-left: 4px;
  width: 1602px;
  display: flex;
  align-items: center;
  justify-content: flex-end;
  padding-right: 2px;
}

/* sheet */
.sheet-wrap { height: 673px; flex: none; display: flex; background: #e6e6e6; }
.sheet { position: relative; width: 1895px; height: 673px; flex: none; overflow: hidden; }
.grid {
  display: grid;
  width: 1937px;
  grid-template-columns: 33px 80px 80px 143px 80px 81px repeat(17, 80px) 80px;
  grid-template-rows: 23px repeat(27, 24px);
  font-family: Lato, "Liberation Sans", sans-serif;
  font-size: 15.500px;
  color: #1a1a1a;
  background: #fff;
  border-bottom: 2px solid #c4c4c4;
}
.corner { background: #e6e6e6; position: relative; border-right: 1px solid #b8b8b8; border-bottom: 1px solid #9e9e9e; box-sizing: border-box; }
.corner i {
  position: absolute;
  right: 3px;
  bottom: 2px;
  width: 0;
  height: 0;
  border-left: 16px solid transparent;
  border-bottom: 16px solid #b4b4b4;
}
.colhead {
  background: #e6e6e6;
  box-sizing: border-box;
  border-right: 1px solid #b8b8b8;
  border-bottom: 1px solid #9e9e9e;
  display: flex;
  align-items: center;
  justify-content: center;
  padding: 1px 0 0 1px;
  color: #262626;
  overflow: hidden;
}
.colhead.sel { background: #cfcfcf; color: #1f6b43; border-bottom: 2px solid #1f6b43; }
.rowhead {
  background: #e6e6e6;
  box-sizing: border-box;
  border-right: 1px solid #b8b8b8;
  border-bottom: 1px solid #c6c6c6;
  display: flex;
  align-items: center;
  justify-content: center;
  padding-top: 2px;
  color: #262626;
}
.rowhead.sel { background: #d2d2d2; color: #1f6b43; border-right: 2px solid #1f6b43; }
.cell {
  box-sizing: border-box;
  border-right: 1px solid #d6d6d6;
  border-bottom: 1px solid #d6d6d6;
  display: flex;
  align-items: center;
  justify-content: flex-end;
  padding: 2px 2px 0 0;
  white-space: nowrap;
}
.cell.shade { background: #c6c6c6; border-color: #b9b9b9; }
.selection {
  position: absolute;
  left: 335px;
  top: 142px;
  width: 162px;
  height: 531px;
  box-sizing: border-box;
  border: 2px solid #1f6b43;
  border-bottom: 0;
  pointer-events: none;
}

.run-btn {
  position: absolute;
  left: 654px;
  top: 71px;
  width: 242px;
  height: 98px;
  box-sizing: border-box;
  padding-top: 3px;
  background: #f0f0f0;
  border-left: 2px solid #777;
  border-top: 2px solid #777;
  display: flex;
  align-items: center;
  justify-content: center;
  color: #e0141c;
  font-family: Lato, "Liberation Sans", sans-serif;
  font-size: 28px;
}
.arrow { position: absolute; left: 984px; top: 80px; }
.hint {
  position: absolute;
  left: 1137px;
  top: 85px;
  width: 353px;
  height: 58px;
  box-sizing: border-box;
  background: #fff;
  border: 1px solid #c4c4c4;
  display: flex;
  align-items: center;
  justify-content: center;
  color: #e3000f;
  font-family: "Liberation Serif", serif;
  font-weight: 700;
  font-size: 30px;
  white-space: nowrap;
}
.dialog {
  position: absolute;
  left: 882px;
  top: 160px;
  width: 176px;
  height: 185px;
  box-sizing: border-box;
  border: 1px solid #bfbfbf;
  border-radius: 8px;
  overflow: hidden;
  display: flex;
  flex-direction: column;
  background: #fff;
  box-shadow: 0 18px 45px rgba(0, 0, 0, 0.38);
  font-size: 14px;
  color: #222;
}
.dlg-head {
  height: 36px;
  flex: none;
  background: #e8f5ee;
  display: flex;
  align-items: center;
  justify-content: space-between;
  padding: 0 14px 0 9px;
  white-space: nowrap;
}
.dlg-body {
  height: 86px;
  flex: none;
  display: flex;
  align-items: center;
  padding: 1px 0 0 14px;
  box-sizing: border-box;
  font-size: 13.500px;
  white-space: nowrap;
}
.dlg-foot {
  flex: 1;
  background: #f0f0f0;
  padding: 16px 0 0 53px;
}
.dlg-foot button {
  width: 98px;
  height: 31px;
  background: #fff;
  border: 1.500px solid #0067c0;
  border-radius: 3px;
  font: inherit;
  font-size: 13px;
  color: #222;
  padding: 0;
}

.vscroll {
  flex: 1;
  display: flex;
  flex-direction: column;
  align-items: center;
  box-sizing: border-box;
  padding: 2px 2px 1px 0;
  height: 673px;
}
.sb-btn {
  width: 18px;
  height: 20px;
  background: #fff;
  border: 1px solid #a6a6a6;
  box-sizing: border-box;
  display: flex;
  align-items: center;
  justify-content: center;
  flex: none;
}
.vthumb { width: 18px; height: 18px; background: #fff; border: 1px solid #8c8c8c; box-sizing: border-box; flex: none; }
.sb-space { flex: 1; }
.tri-up { border: 5px solid transparent; border-bottom: 6px solid #333; border-top: 0; }
.tri-down { border: 5px solid transparent; border-top: 6px solid #333; border-bottom: 0; }
.tri-left { border: 5px solid transparent; border-right: 6px solid #333; border-left: 0; }
.tri-right { border: 5px solid transparent; border-left: 6px solid #333; border-right: 0; }

/* sheet tabs */
.tabbar {
  height: 29px;
  flex: none;
  box-sizing: border-box;
  background: #e6e6e6;
  border-bottom: 1px solid #c9c9c9;
  display: flex;
  align-items: flex-start;
  padding-left: 27px;
}
.nav-l { margin-top: 10px; border: 5px solid transparent; border-right: 5px solid #c4c4c4; border-left: 0; }
.nav-r { margin: 10px 0 0 23px; border: 5px solid transparent; border-left: 5px solid #c4c4c4; border-right: 0; }
.sheet-tab {
  margin-left: 42px;
  width: 63px;
  height: 26px;
  box-sizing: border-box;
  background: #fff;
  border: 1px solid #c9c9c9;
  border-top: 0;
  border-bottom: 2px solid #217346;
  text-align: center;
  line-height: 21px;
  font-weight: 700;
  color: #217346;
  font-size: 16.500px;
}
.add-sheet {
  margin: 4px 0 0 33px;
  width: 21px;
  height: 21px;
  box-sizing: border-box;
  border: 1px solid #8a8a8a;
  border-radius: 50%;
  display: flex;
  align-items: center;
  justify-content: center;
}
.tab-grip { margin: 8px 0 0 929px; }
.hscroll { margin: 5px 0 0 15px; display: flex; width: 728px; height: 18px; align-items: stretch; }
.hscroll .sb-btn { height: 18px; }
.hthumb { width: 660px; background: #fff; border: 1px solid #8c8c8c; box-sizing: border-box; margin: 0 32px 0 0; }

/* status bar */
.statusbar {
  height: 27px;
  flex: none;
  box-sizing: border-box;
  background: #f3f2f1;
  border-bottom: 1px solid #c8c8c8;
  display: flex;
  align-items: center;
  padding-left: 9px;
  font-size: 13px;
  color: #444;
}
.status-text { width: 1538px; white-space: nowrap; }
.view-btns { display: flex; height: 100%; }
.view { width: 50px; display: flex; align-items: center; justify-content: center; }
.view.picked { background: #c8c8c8; }
.zoom-minus { margin-left: 8px; }
.zoom-track { margin-left: 6px; width: 125px; height: 1px; background: #555; position: relative; }
.zoom-track i { position: absolute; left: 60px; top: -7px; width: 6px; height: 15px; background: #444; }
.zoom-plus { margin-left: 6px; }
.zoom-val { margin-left: 16px; color: #555; font-size: 13px; }

/* taskbar */
.taskbar {
  height: 60px;
  flex: none;
  position: relative;
  display: flex;
  align-items: center;
  color: #333;
  font-size: 14px;
  font-family: "Open Sans", "Noto Sans", sans-serif;
  background: linear-gradient(90deg, #d3dbee 0, #d8e1f2 28%, #cfe9ef 35%, #c8f0d4 42%, #c6eeee 49%, #d4edd8 53%, #f6e8c8 56%, #fbe8c2 60%, #fbe8c2 100%);
}
.weather { margin-left: 25px; width: 533px; display: flex; flex: none; align-items: center; }
.weather-ico { position: relative; width: 40px; height: 40px; display: flex; align-items: flex-end; }
.badge {
  position: absolute;
  left: 14px;
  top: -4px;
  width: 20px;
  height: 20px;
  border-radius: 50%;
  background: #c42b1c;
  color: #fff;
  text-align: center;
  line-height: 20px;
  font-size: 13px;
}
.weather-text { display: flex; flex-direction: column; line-height: 21px; font-size: 14.300px; }
.weather-text .dim { color: #5a5a5a; }
.winlogo { margin-left: 0; }
.tb-search {
  margin-left: 16px;
  width: 274px;
  height: 38px;
  box-sizing: border-box;
  background: linear-gradient(90deg, #f8fbfd, #f3fbf6);
  border: 1px solid #e0e8e4;
  border-radius: 19px;
  display: flex;
  align-items: center;
  padding-left: 12px;
  gap: 13px;
  color: #555;
  font-size: 16.500px;
  position: relative;
}
.boat { margin-left: auto; margin-right: 3px; }
.taskview { margin-left: 17px; }
.meet { margin-left: 24px; }
.folder { margin-left: 26px; }
.edge { margin-left: 24px; }
.store { margin-left: 23px; }
.pen { margin-left: 26px; }
.mcafee { margin-left: 26px; }
.chrome { margin-left: 29px; }
.tb-excel {
  margin-left: 14px;
  width: 48px;
  height: 48px;
  background: rgba(255, 255, 255, 0.55);
  border-radius: 4px;
  display: flex;
  align-items: center;
  justify-content: center;
}
.x-mark { font-size: 12px; font-weight: 700; fill: #fff; }
.tray { margin-left: 205px; display: flex; align-items: center; color: #222; }
.tray-cloud { margin-left: 22px; }
.tray-wifi { margin-left: 19px; }
.tray-vol { margin-left: 9px; }
.tray-bat { margin-left: 12px; }
.clock {
  margin-left: 18px;
  width: 62px;
  font-size: 15px;
  display: flex;
  flex-direction: column;
  align-items: flex-end;
  line-height: 21px;
  white-space: nowrap;
}
.tray-bell { margin-left: 13px; }
.copilot { margin-left: 23px; position: relative; }
.pre {
  position: absolute;
  right: -2px;
  bottom: -5px;
  width: 22px;
  height: 10px;
  border-radius: 2px;
  background: #f7b500;
  color: #222;
  font-size: 8px;
  font-weight: 700;
  line-height: 10px;
  text-align: center;
}
.run-dot { position: absolute; top: 52px; width: 5px; height: 5px; border-radius: 50%; background: #7a7a7a; }
.dot-a { left: 1017px; }
.dot-b { left: 1291px; }
.run-bar { position: absolute; left: 1339px; top: 52px; width: 21px; height: 4px; border-radius: 2px; background: #0067c0; }
</style>
